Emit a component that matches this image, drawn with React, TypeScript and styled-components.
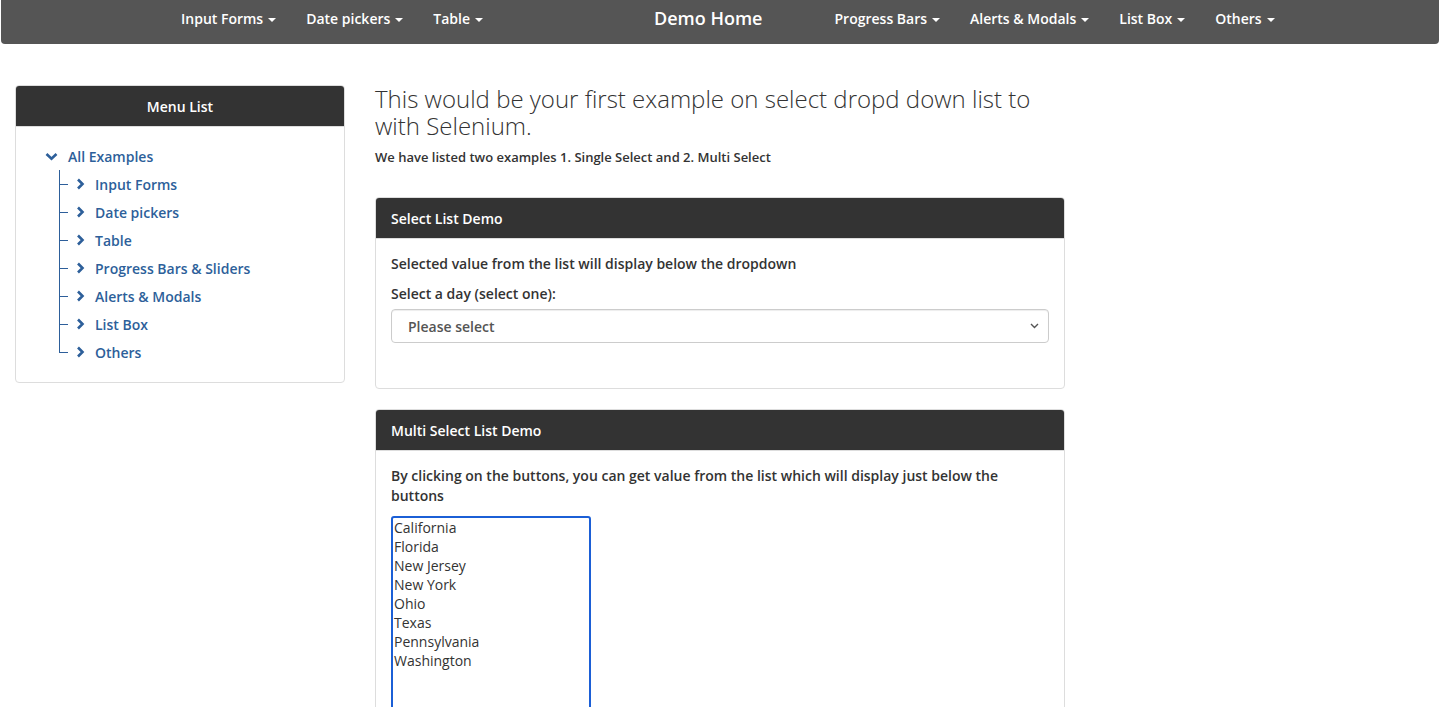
import styled, { createGlobalStyle } from 'styled-components'

const GlobalStyle = createGlobalStyle`
  body {
    margin: 0;
    font-family: "Open Sans", "Noto Sans", sans-serif;
    color: #333;
    background: #fff;
  }
`

const Navbar = styled.nav`
  height: 44px;
  margin: 0 1px;
  background: #555;
  border-radius: 0 0 4px 4px;
  display: flex;
  align-items: flex-start;
  padding-left: 165px;
  box-sizing: border-box;
`

const NavGroup = styled.ul<{ $gap: number }>`
  display: flex;
  list-style: none;
  margin: 0 0 0 ${p => p.$gap}px;
  padding: 0;
`

const NavItem = styled.li`
  padding: 0 15px;
  color: #fff;
  font-size: 14px;
  font-weight: 600;
  display: flex;
  align-items: center;
  line-height: 38px;
`

const Caret = styled.span`
  display: inline-block;
  margin-left: 5px;
  border-top: 4px solid #fff;
  border-left: 4px solid transparent;
  border-right: 4px solid transparent;
  margin-top: 1px;
`

const Brand = styled.div`
  margin-left: 156px;
  color: #fff;
  font-size: 18px;
  font-weight: 600;
  line-height: 37px;
`

const Row = styled.div`
  display: grid;
  grid-template-columns: 25% 50% 25%;
  padding-top: 41px;
`

const Col = styled.div`
  padding: 0 15px;
`

const Panel = styled.section`
  border: 1px solid #ddd;
  border-radius: 4px;
  margin-bottom: 20px;
  background: #fff;
  overflow: hidden;
`

const PanelHead = styled.div<{ $center?: boolean }>`
  height: 40px;
  background: #333;
  color: #fff;
  font-size: 14px;
  font-weight: 600;
  display: flex;
  align-items: center;
  justify-content: ${p => (p.$center ? 'center' : 'flex-start')};
  padding: 0 15px;
  border-bottom: 1px solid #ddd;
`

const PanelBody = styled.div`
  padding: 15px 15px;
`

const Tree = styled.ul`
  list-style: none;
  margin: 0;
  padding: 0 0 1px 14px;
`

const RootItem = styled.li`
  color: #2d5f9a;
  font-size: 14px;
  font-weight: 600;
`

const TreeLabel = styled.div`
  display: flex;
  align-items: center;
  height: 28px;
  gap: 10px;

  svg {
    flex: none;
  }
`

const Children = styled.ul`
  list-style: none;
  margin: 0 0 0 14px;
  padding: 0;
  position: relative;

  &::before {
    content: '';
    position: absolute;
    left: 0;
    top: 0;
    bottom: 14px;
    border-left: 1px solid #2d5f9a;
  }
`

const ChildItem = styled.li`
  position: relative;
  padding-left: 17px;

  &::before {
    content: '';
    position: absolute;
    left: 0;
    top: 14px;
    width: 9px;
    border-top: 1px solid #2d5f9a;
  }
`

const Heading = styled.h2`
  margin: 0 0 8px;
  font-size: 24px;
  font-weight: 300;
  line-height: 27px;
  color: #333;
`

const Lead = styled.p`
  margin: 0 0 30px;
  font-size: 13px;
  font-weight: 600;
  line-height: 20px;
`

const Text = styled.p<{ $mb?: number }>`
  margin: 0 0 ${p => p.$mb ?? 10}px;
  font-size: 14px;
  font-weight: 600;
  line-height: 20px;
`

const SelectWrap = styled.div`
  position: relative;
  margin-bottom: 30px;

  svg {
    position: absolute;
    right: 10px;
    top: 14px;
    pointer-events: none;
  }
`

const Select = styled.select`
  width: 100%;
  height: 34px;
  appearance: none;
  border: 1px solid #ccc;
  border-radius: 4px;
  background: #fff;
  padding: 0 16px;
  font-family: inherit;
  font-size: 14px;
  font-weight: 600;
  color: #555;
  box-shadow: inset 0 1px 1px rgba(0, 0, 0, 0.075);
`

const MultiSelect = styled.select`
  width: 200px;
  height: 200px;
  border: 2px solid #1b5fd6;
  border-radius: 3px;
  padding: 0;
  font-family: inherit;
  font-size: 14px;
  color: #333;
  outline: none;
  overflow: hidden;

  option {
    padding: 0 1px;
    line-height: 19px;
    min-height: 19px;
  }
`

const ChevronRight = () => (
  <svg width="9" height="12" viewBox="0 0 9 12">
    <path d="M2 1.5l4.5 4.5L2 10.5" fill="none" stroke="#2d5f9a" strokeWidth="2.6" strokeLinejoin="miter" />
  </svg>
)

const ChevronDown = () => (
  <svg width="13" height="9" viewBox="0 0 13 9">
    <path d="M1.5 2l5 4.8 5-4.8" fill="none" stroke="#2d5f9a" strokeWidth="2.6" strokeLinejoin="miter" />
  </svg>
)

const leftNav = ['Input Forms', 'Date pickers', 'Table']
const rightNav = ['Progress Bars', 'Alerts & Modals', 'List Box', 'Others']
const menu = ['Input Forms', 'Date pickers', 'Table', 'Progress Bars & Sliders', 'Alerts & Modals', 'List Box', 'Others']
const states = ['California', 'Florida', 'New Jersey', 'New York', 'Ohio', 'Texas', 'Pennsylvania', 'Washington']

export default function App() {
  return (
    <>
      <GlobalStyle />
      <Navbar>
        <NavGroup $gap={0}>
          {leftNav.map(n => (
            <NavItem key={n}>{n}<Caret /></NavItem>
          ))}
        </NavGroup>
        <Brand>Demo Home</Brand>
        <NavGroup $gap={57}>
          {rightNav.map(n => (
            <NavItem key={n}>{n}<Caret /></NavItem>
          ))}
        </NavGroup>
      </Navbar>

      <Row>
        <Col>
          <Panel>
            <PanelHead $center>Menu List</PanelHead>
            <PanelBody>
              <Tree>
                <RootItem>
                  <TreeLabel><ChevronDown />All Examples</TreeLabel>
                  <Children>
                    {menu.map(m => (
                      <ChildItem key={m}>
                        <TreeLabel><ChevronRight />{m}</TreeLabel>
                      </ChildItem>
                    ))}
                  </Children>
                </RootItem>
              </Tree>
            </PanelBody>
          </Panel>
        </Col>

        <Col>
          <Heading>This would be your first example on select dropd down list to with Selenium.</Heading>
          <Lead>We have listed two examples 1. Single Select and 2. Multi Select</Lead>

          <Panel>
            <PanelHead>Select List Demo</PanelHead>
            <PanelBody>
              <Text>Selected value from the list will display below the dropdown</Text>
              <Text $mb={5}>Select a day (select one):</Text>
              <SelectWrap>
                <Select defaultValue="">
                  <option value="">Please select</option>
                  <option>Sunday</option>
                  <option>Monday</option>
                  <option>Tuesday</option>
                  <option>Wednesday</option>
                  <option>Thursday</option>
                  <option>Friday</option>
                  <option>Saturday</option>
                </Select>
                <svg width="9" height="6" viewBox="0 0 9 6">
                  <path d="M1 1l3.5 3.5L8 1" fill="none" stroke="#555" strokeWidth="1.4" />
                </svg>
              </SelectWrap>
            </PanelBody>
          </Panel>

          <Panel>
            <PanelHead>Multi Select List Demo</PanelHead>
            <PanelBody>
              <Text>By clicking on the buttons, you can get value from the list which will display just below the buttons</Text>
              <MultiSelect multiple size={10}>
                {states.map(s => (
                  <option key={s}>{s}</option>
                ))}
              </MultiSelect>
            </PanelBody>
          </Panel>
        </Col>
        <Col />
      </Row>
    </>
  )
}
